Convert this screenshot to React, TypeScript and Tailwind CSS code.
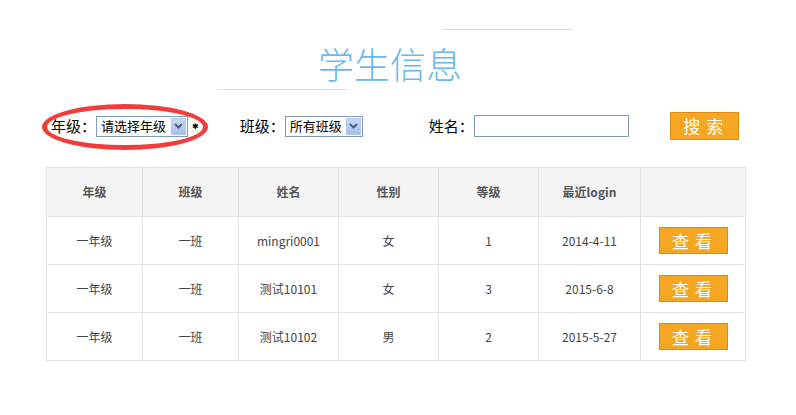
const rows = [
  ["一年级", "一班", "mingri0001", "女", "1", "2014-4-11"],
  ["一年级", "一班", "测试10101", "女", "3", "2015-6-8"],
  ["一年级", "一班", "测试10102", "男", "2", "2015-5-27"],
];
const widths = ["w-[96px]", "w-[96px]", "w-[100px]", "w-[100px]", "w-[100px]", "w-[102px]", "w-[106px]"];
const heads = ["年级", "班级", "姓名", "性别", "等级", "最近login", ""];
const cjk = { fontFamily: '"SimSun","Noto Sans CJK SC","DejaVu Sans",sans-serif' };

function Sel({ text, w }: { text: string; w: string }) {
  return (
    <div className={`flex items-center h-[21px] border border-[#7f9db9] bg-white pl-[4px] pr-[1px] ${w} justify-between`}>
      <span className="text-[13px] text-black">{text}</span>
      <span className="w-[15px] h-[17px] bg-gradient-to-b from-[#c8d8f8] to-[#a8c0f0] border border-[#b3c6ee] flex items-center justify-center">
        <svg width="9" height="6" viewBox="0 0 9 6"><path d="M1 1l3.5 3.5L8 1" stroke="#4d6185" strokeWidth="2" fill="none" /></svg>
      </span>
    </div>
  );
}

export default function App() {
  return (
    <div className="w-[796px] h-[415px] bg-white relative" style={cjk}>
      <div className="flex flex-col items-center pt-[29px]">
        <div className="h-px w-[130px] bg-[#ddd] ml-[217px]" />
        <div className="text-[36px] leading-[44px] text-[#6ab8ef] font-light mt-[11px] ml-[-16px]" style={{ fontFamily: '"Noto Sans CJK SC",sans-serif', fontWeight: 300 }}>学生信息</div>
        <div className="h-px w-[130px] bg-[#ddd] mr-[232px] mt-[4px]" />
      </div>
      <div className="flex items-center mt-[22px] h-[28px] pl-[51px] text-[15px] text-black">
        <span>年级：</span>
        <Sel text="请选择年级" w="w-[92px]" />
        <span className="ml-[4px] text-[8px]">✱</span>
        <span className="ml-[41px]">班级：</span>
        <Sel text="所有班级" w="w-[78px]" />
        <span className="ml-[66px]">姓名：</span>
        <div className="w-[155px] h-[22px] border border-[#7f9db9]" />
        <button className="ml-[41px] w-[69px] h-[28px] bg-[#f5a623] border border-[#e08a10] text-white text-[17px] tracking-[6px] pl-[4px]">搜索</button>
      </div>
      <div className="absolute left-[42px] top-[104px] w-[166px] h-[46px] rounded-[50%] border-[5px] border-[#f23c3c]" />
      <div className="mt-[27px] ml-[46px] w-[700px] border border-[#e3e3e3] text-[12px] text-[#444]">
        <div className="flex h-[48px] bg-[#f4f4f4] font-bold text-[#555]">
          {heads.map((h, i) => (
            <div key={i} className={`${widths[i]} flex items-center justify-center ${i < 6 ? "border-r border-[#e3e3e3]" : "flex-1"}`}>{h}</div>
          ))}
        </div>
        {rows.map((r, ri) => (
          <div key={ri} className="flex h-[48px] border-t border-[#e3e3e3]">
            {r.map((c, i) => (
              <div key={i} className={`${widths[i]} flex items-center justify-center border-r border-[#e3e3e3]`}>{c}</div>
            ))}
            <div className="flex-1 flex items-center justify-center">
              <button className="w-[69px] h-[27px] bg-[#f5a623] border border-[#e08a10] text-white text-[17px] tracking-[6px] pl-[4px]">查看</button>
            </div>
          </div>
        ))}
      </div>
    </div>
  );
}
